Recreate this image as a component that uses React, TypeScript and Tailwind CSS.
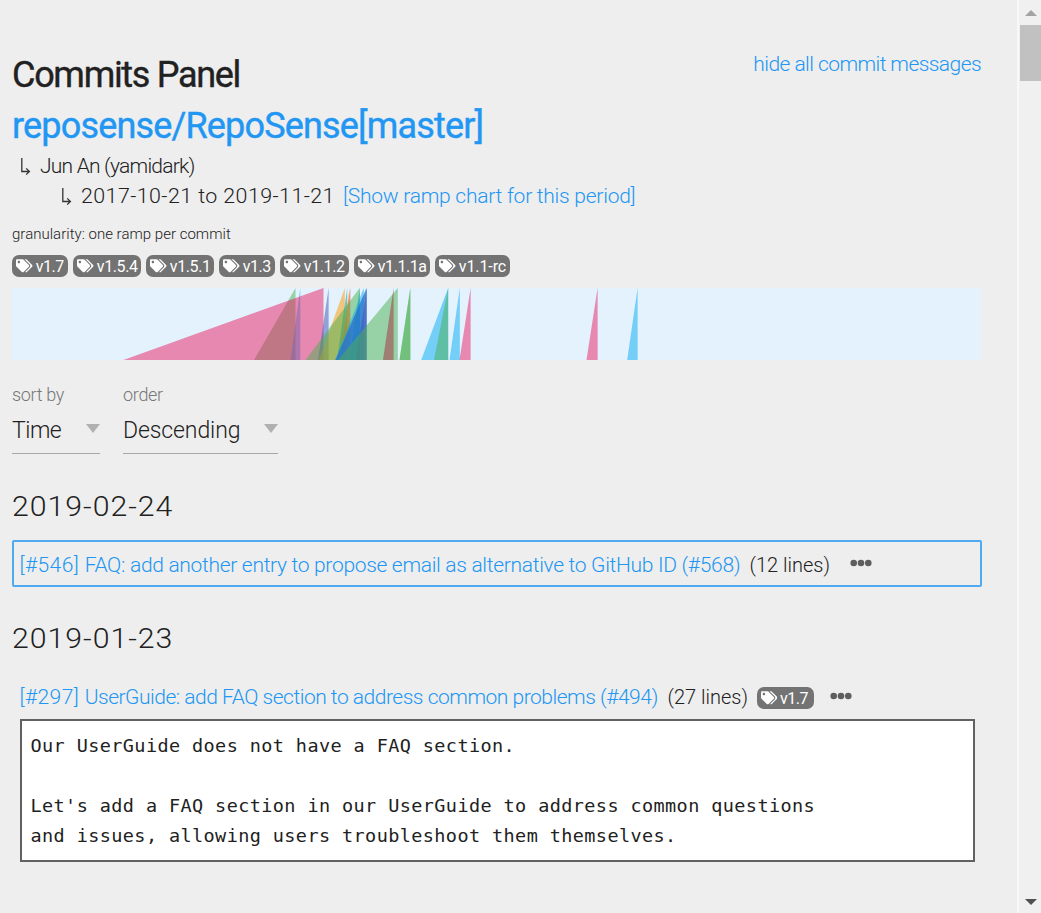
type Ramp = { left: number; right: number; color: string };

const PINK = "#e91e63";
const BLUE = "#03a9f4";
const GREEN = "#4caf50";
const INDIGO = "#3f51b5";
const ORANGE = "#ff9800";
const TEAL = "#009688";
const BROWN = "#a52e3c";

// Horizontal extents of each ramp, in chart units.
const ramps: Ramp[] = [
  { left: 242, right: 283.5, color: GREEN },
  { left: 278.5, right: 288.3, color: BLUE },
  { left: 111.5, right: 311.5, color: PINK },
  { left: 306, right: 316.6, color: INDIGO },
  { left: 307, right: 332.8, color: ORANGE },
  { left: 325, right: 335.2, color: TEAL },
  { left: 327.5, right: 338.3, color: PINK },
  { left: 327, right: 337.6, color: ORANGE },
  { left: 293.5, right: 347.7, color: GREEN },
  { left: 337, right: 348, color: TEAL },
  { left: 323, right: 351.8, color: BLUE },
  { left: 323.5, right: 354.5, color: BLUE },
  { left: 323.5, right: 354.7, color: INDIGO },
  { left: 344, right: 354.7, color: INDIGO },
  { left: 326, right: 385.8, color: GREEN },
  { left: 371, right: 381.6, color: BROWN },
  { left: 387.5, right: 398.5, color: GREEN },
  { left: 387.5, right: 398.2, color: GREEN },
  { left: 409.2, right: 436.2, color: BLUE },
  { left: 422, right: 436.2, color: GREEN },
  { left: 437.5, right: 447.8, color: BLUE },
  { left: 447.5, right: 458.6, color: PINK },
  { left: 574.5, right: 585.6, color: PINK },
  { left: 615.2, right: 625.6, color: BLUE },
];

function BranchArrow() {
  return (
    <svg className="shrink-0" width="11" height="20" viewBox="0 0 11 20" fill="none" stroke="#333" strokeWidth="1.3">
      <path d="M1.8 2V15.5H9.4M6.2 12.4L9.4 15.5L6.2 18.6" />
    </svg>
  );
}

function TagsIcon() {
  return (
    <svg className="shrink-0" width="16.5" height="13.5" viewBox="0 0 640 512" fill="#fff">
      <path d="M497.941 225.941L286.059 14.059A48 48 0 0 0 252.118 0H48C21.49 0 0 21.49 0 48v204.118a48 48 0 0 0 14.059 33.941l211.882 211.882c18.744 18.745 49.136 18.746 67.882 0l204.118-204.118c18.745-18.745 18.745-49.137 0-67.882zM112 160c-26.51 0-48-21.49-48-48s21.49-48 48-48 48 21.49 48 48-21.49 48-48 48zm513.941 133.823L421.823 497.941c-18.745 18.745-49.137 18.745-67.882 0l-.36-.36L527.64 323.522c16.999-16.999 26.36-39.6 26.36-63.64s-9.362-46.641-26.36-63.64L331.397 0h48.721a48 48 0 0 1 33.941 14.059l211.882 211.882c18.745 18.745 18.745 49.137 0 67.882z" />
    </svg>
  );
}

function Tag({ label, className }: { label: string; className: string }) {
  return (
    <span className={`flex h-[22px] shrink-0 items-center gap-[3px] rounded-[7px] bg-[#737373] pl-1 text-[16px] text-white ${className}`}>
      <TagsIcon />
      <span className="pt-[2px] leading-[24px]">{label}</span>
    </span>
  );
}

function Dots() {
  return (
    <svg width="22" height="8" viewBox="0 0 22 8" fill="#5e5e5e">
      <circle cx="3.7" cy="4" r="3.3" />
      <circle cx="11" cy="4" r="3.3" />
      <circle cx="18.3" cy="4" r="3.3" />
    </svg>
  );
}

type SelectProps = { label: string; value: string; className: string; labelClass: string; valueClass: string };

function Select({ label, value, className, labelClass, valueClass }: SelectProps) {
  return (
    <div className={`flex flex-col border-b border-[#a8a8a8] ${className}`}>
      <div className={`h-[20px] text-[18px] leading-[20px] font-light text-[#777] ${labelClass}`}>{label}</div>
      <div className="flex h-[48px] items-center justify-between">
        <span className={`pt-[5px] text-[23px] font-light ${valueClass}`}>{value}</span>
        <svg className="mb-[1px]" width="14" height="9" viewBox="0 0 14 9" fill="#b0b0b0">
          <path d="M0 0H14L7 9Z" />
        </svg>
      </div>
    </div>
  );
}

function DateHeading({ date, className }: { date: string; className: string }) {
  return (
    <h3 className={`h-[40px] w-[200px] origin-left scale-x-112 text-[27px] leading-[40px] font-light tracking-[0.88px] ${className}`}>
      {date}
    </h3>
  );
}

export default function App() {
  return (
    <div className="flex h-[913px] w-[1041px] overflow-hidden bg-[#eeeeee] font-[Roboto,sans-serif] whitespace-nowrap text-[#212121]">
      <main className="flex w-[1017px] flex-col pt-[49px] pl-3">
        <div className="flex w-[969px] items-start justify-between">
          <h1 className="h-[51px] text-[36px] leading-[53px] font-normal tracking-[-1.3px] [-webkit-text-stroke:0.4px]">Commits Panel</h1>
          <a className="h-[30px] text-[21px] leading-[30px] font-light tracking-[-0.57px] text-[#2196f3]">hide all commit messages</a>
        </div>
        <h2 className="h-[51px] text-[36px] leading-[53px] font-normal tracking-[-0.83px] text-[#2196f3] [-webkit-text-stroke:0.4px]">reposense/RepoSense[master]</h2>
        <div className="flex h-[30px] items-center gap-[9px] pl-2">
          <BranchArrow />
          <span className="text-[21px] leading-[30px] font-light tracking-[-0.78px]">Jun An (yamidark)</span>
        </div>
        <div className="flex h-[30px] items-center pl-[49px]">
          <BranchArrow />
          <span className="ml-[9px] w-[262px] origin-left scale-x-107 text-[20px] leading-[30px] font-light tracking-[0.4px]">2017-10-21 to 2019-11-21</span>
          <a className="text-[21px] leading-[30px] font-light tracking-[-0.25px] text-[#2196f3]">[Show ramp chart for this period]</a>
        </div>
        <div className="mt-[12px] h-[22px] text-[15px] leading-[22px] font-light tracking-[0.02px]">granularity: one ramp per commit</div>
        <div className="mt-[10px] flex h-[22px] gap-[5px] pl-[0.3px]">
          <Tag label="v1.7" className="w-[56px] tracking-[-0.5px]" />
          <Tag label="v1.5.4" className="w-[68px] tracking-[-0.4px]" />
          <Tag label="v1.5.1" className="w-[68px] tracking-[-0.4px]" />
          <Tag label="v1.3" className="w-[56px] tracking-[-0.5px]" />
          <Tag label="v1.1.2" className="w-[69px] tracking-[-0.4px]" />
          <Tag label="v1.1.1a" className="w-[76px] tracking-[-0.45px]" />
          <Tag label="v1.1-rc" className="w-[75px] tracking-[-0.1px]" />
        </div>
        <svg className="mt-[11px] block shrink-0 bg-[#e3f2fd]" width="969" height="72" viewBox="0 0 969 72">
          {ramps.map((r, i) => (
            <polygon key={i} points={`${r.left},72 ${r.right},72 ${r.right},0`} fill={r.color} fillOpacity="0.5" />
          ))}
        </svg>
        <div className="mt-[25px] flex gap-[23px]">
          <Select label="sort by" value="Time" className="w-[88px]" labelClass="tracking-[-0.35px]" valueClass="tracking-[-0.5px]" />
          <Select label="order" value="Descending" className="w-[155px]" labelClass="tracking-[-0.3px]" valueClass="tracking-[-0.1px]" />
        </div>
        <DateHeading date="2019-02-24" className="mt-[33px]" />
        <div className="mt-[13px] flex h-[47px] w-[970px] items-center rounded-[2px] border-2 border-[#4faaf0] pt-[2px] pl-[5.5px]">
          <a className="w-[730px] text-[21px] leading-[30px] font-light tracking-[-0.31px] text-[#2196f3]">
            <span className="tracking-[0.4px]">[#546] </span>FAQ: add another entry to propose email as alternative to GitHub ID (#568)
          </a>
          <span className="w-[100.5px] text-[20px] leading-[30px] font-light">(12 lines)</span>
          <span className="mb-[3px] flex"><Dots /></span>
        </div>
        <DateHeading date="2019-01-23" className="mt-[32px]" />
        <div className="mt-[23px] flex h-[30px] items-center pl-[7.5px]">
          <a className="w-[648px] text-[21px] leading-[30px] font-light tracking-[-0.49px] text-[#2196f3]">
            <span className="tracking-[0.4px]">[#297] </span>UserGuide: add FAQ section to address common problems (#494)
          </a>
          <span className="w-[89px] text-[20px] leading-[30px] font-light">(27 lines)</span>
          <Tag label="v1.7" className="mt-[2px] w-[57px] tracking-[-0.5px]" />
          <span className="mb-[3px] ml-[16.5px] flex"><Dots /></span>
        </div>
        <pre className="mt-[7px] ml-[7.5px] h-[143px] w-[955px] border-2 border-[#616161] bg-white pt-[10px] pl-[9px] font-['DejaVu_Sans_Mono',monospace] text-[18.5px] leading-[30px] tracking-[0.4px]">
          {"Our UserGuide does not have a FAQ section.\n\nLet's add a FAQ section in our UserGuide to address common questions\nand issues, allowing users troubleshoot them themselves."}
        </pre>
      </main>
      <aside className="flex w-[24px] flex-col items-end border-l-2 border-[#f8f8f8] bg-[#f0f0f0]">
        <div className="flex h-[25px] w-[21px] items-center justify-center">
          <svg width="12" height="6" viewBox="0 0 12 6" fill="#a3a3a3"><path d="M0 6H12L6 0Z" /></svg>
        </div>
        <div className="h-[56px] w-[21px] bg-[#c1c1c1]" />
        <div className="mt-auto flex h-[23px] w-[21px] items-center justify-center">
          <svg width="12" height="6" viewBox="0 0 12 6" fill="#505050"><path d="M0 0H12L6 6Z" /></svg>
        </div>
      </aside>
    </div>
  );
}
